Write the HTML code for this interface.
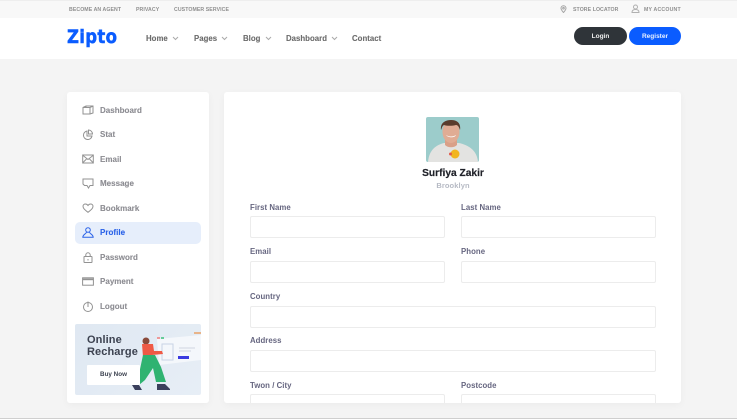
<!DOCTYPE html>
<html><head><meta charset="utf-8"><style>
*{box-sizing:border-box}
html,body{margin:0;padding:0;width:737px;height:419px;overflow:hidden;background:#f4f4f4;font-family:"Liberation Sans",sans-serif}
.a{position:absolute;white-space:nowrap}
#w{position:absolute;left:0;top:0;width:737px;height:419px;overflow:hidden;filter:blur(.35px)}
.top{font-size:5.2px;font-weight:700;color:#8f8f8f;letter-spacing:.08px;top:6.500px;line-height:6px}
.nav{font-size:7.8px;font-weight:700;color:#6c6c6c;letter-spacing:.03px;top:33.500px;line-height:10px;-webkit-text-stroke:.1px #6c6c6c}
.side{font-size:8px;font-weight:700;color:#8c8c92;letter-spacing:.02px;left:100px;line-height:10px;-webkit-text-stroke:.1px #8c8c92}
.lab{font-size:7.8px;font-weight:700;color:#666680;letter-spacing:.05px;line-height:10px}
.inp{position:absolute;height:22px;background:#fff;border:1px solid #ececec;border-radius:2px}
svg.i{position:absolute;fill:none;stroke:#929292;stroke-width:1}
</style></head><body><div id="w">
<div class="a" style="left:0;top:0;width:737px;height:18px;background:#f8f8f8;border-top:1px solid #eee"></div>
<div class="a" style="left:0;top:18px;width:737px;height:41px;background:#fff"></div>
<div class="a top" style="left:69px">BECOME AN AGENT</div>
<div class="a top" style="left:136px">PRIVACY</div>
<div class="a top" style="left:174px">CUSTOMER SERVICE</div>
<svg class="i" style="left:560px;top:5px;stroke:#a5a5a5" width="7" height="8" viewBox="0 0 7 8"><path d="M3.5 7.5C2 5.8 1 4.6 1 3.2a2.5 2.5 0 0 1 5 0c0 1.400-1 2.600-2.500 4.300z"/><circle cx="3.500" cy="3.200" r=".8"/></svg>
<div class="a top" style="left:573px">STORE LOCATOR</div>
<svg class="i" style="left:631px;top:4px;stroke:#b0b0b0" width="9" height="9" viewBox="0 0 9 9"><circle cx="4.500" cy="3" r="2"/><path d="M1 8.500c0-2 1.500-3 3.500-3s3.500 1 3.500 3z"/></svg>
<div class="a top" style="left:644px;letter-spacing:.2px">MY ACCOUNT</div>

<div class="a" style="left:67px;top:26px;font-size:19px;line-height:22px;font-weight:700;color:#0a5cff;letter-spacing:.35px;-webkit-text-stroke:.5px #0a5cff;font-family:'DejaVu Sans',sans-serif;transform:scaleX(.87);transform-origin:0 0">Zipto</div>
<div class="a nav" style="left:146px">Home</div>
<div class="a nav" style="left:194px">Pages</div>
<div class="a nav" style="left:243px">Blog</div>
<div class="a nav" style="left:286px">Dashboard</div>
<div class="a nav" style="left:352px">Contact</div>
<svg class="i" style="left:172px;top:36px;stroke:#aaa" width="7" height="5" viewBox="0 0 7 5"><path d="M1 1l2.500 2.500L6 1"/></svg>
<svg class="i" style="left:221px;top:36px;stroke:#aaa" width="7" height="5" viewBox="0 0 7 5"><path d="M1 1l2.500 2.500L6 1"/></svg>
<svg class="i" style="left:265px;top:36px;stroke:#aaa" width="7" height="5" viewBox="0 0 7 5"><path d="M1 1l2.500 2.500L6 1"/></svg>
<svg class="i" style="left:331px;top:36px;stroke:#aaa" width="7" height="5" viewBox="0 0 7 5"><path d="M1 1l2.500 2.500L6 1"/></svg>

<div class="a" style="left:574px;top:27px;width:53px;height:18px;border-radius:9px;background:#2f3439;color:#eee;font-size:6.500px;font-weight:700;text-align:center;line-height:19px">Login</div>
<div class="a" style="left:629px;top:27px;width:52px;height:18px;border-radius:9px;background:#0a5cff;color:#e8f0ff;font-size:6.500px;font-weight:700;text-align:center;line-height:19px">Register</div>

<div class="a" style="left:67px;top:92px;width:142px;height:311px;background:#fff;border-radius:3px;box-shadow:0 2px 8px rgba(0,0,0,.04)"></div>
<div class="a" style="left:224px;top:92px;width:457px;height:311px;background:#fff;border-radius:3px;box-shadow:0 2px 8px rgba(0,0,0,.04)"></div>

<div class="a" style="left:75px;top:222px;width:126px;height:22px;background:#e6eefb;border-radius:5px"></div>

<div class="a side" style="top:105.500px">Dashboard</div>
<div class="a side" style="top:130px">Stat</div>
<div class="a side" style="top:154.500px">Email</div>
<div class="a side" style="top:179px">Message</div>
<div class="a side" style="top:203.500px">Bookmark</div>
<div class="a side" style="top:228px;color:#2a62e8;-webkit-text-stroke:.1px #2a62e8">Profile</div>
<div class="a side" style="top:252.500px">Password</div>
<div class="a side" style="top:277px">Payment</div>
<div class="a side" style="top:301.500px">Logout</div>

<svg class="i" style="left:82px;top:105px" width="12" height="10" viewBox="0 0 12 10"><path d="M1 2.500L4 1h7v7L8 9H1zM1 2.500h7V9M8 2.500L11 1M4 1v2"/></svg>
<svg class="i" style="left:82px;top:129px" width="12" height="11" viewBox="0 0 12 11"><path d="M5 2a4.300 4.300 0 1 0 5 5H5z"/><path d="M6.500 1a4 4 0 0 1 4 4h-4z"/></svg>
<svg class="i" style="left:82px;top:154px" width="12" height="10" viewBox="0 0 12 10"><rect x=".7" y="1" width="10.600" height="8"/><path d="M1 1.500l5 4 5-4M1 8.500l3.500-3.500M11 8.500L7.500 5"/></svg>
<svg class="i" style="left:82px;top:178px" width="12" height="11" viewBox="0 0 12 11"><path d="M1 1h10v6.500H8L6.500 10 5 7.500H2.500L1 6z"/></svg>
<svg class="i" style="left:82px;top:203px" width="12" height="10" viewBox="0 0 12 10"><path d="M6 9.300C3 7 1 5.500 1 3.300 1 1.800 2.200 1 3.400 1 4.500 1 5.400 1.600 6 2.500 6.600 1.600 7.500 1 8.600 1 9.800 1 11 1.800 11 3.300 11 5.500 9 7 6 9.300z"/></svg>
<svg class="i" style="left:82px;top:227px;stroke:#2a62e8" width="12" height="11" viewBox="0 0 12 11"><circle cx="6" cy="3" r="2.300"/><path d="M4.500 5C4.500 7 1 7 .8 10.300h10.400C11 7 7.500 7 7.500 5"/></svg>
<svg class="i" style="left:83px;top:252px" width="10" height="11" viewBox="0 0 10 11"><rect x="1" y="4.500" width="8" height="6" rx=".5"/><path d="M2.800 4.500V3a2.200 2.200 0 0 1 4.400 0v1.500M5 7v1.500"/></svg>
<svg class="i" style="left:82px;top:277px" width="12" height="9" viewBox="0 0 12 9"><rect x=".6" y=".8" width="10.800" height="7.400"/><rect x="1" y="1.500" width="10" height="1.700" fill="#929292" stroke="none"/></svg>
<svg class="i" style="left:82px;top:301px" width="12" height="11" viewBox="0 0 12 11"><circle cx="6" cy="6" r="4.500"/><path d="M6 .5V6"/></svg>

<!-- banner -->
<div class="a" style="left:75px;top:324px;width:126px;height:71px;background:linear-gradient(135deg,#dfe8f2,#e7eef6);border-radius:2px;overflow:hidden">
<div class="a" style="left:12px;top:10px;font-size:11px;line-height:12px;font-weight:700;color:#3c4250;letter-spacing:.1px">Online<br>Recharge</div>
<svg class="a" style="left:0;top:0" width="126" height="71" viewBox="0 0 126 71">
<path d="M82 15L126 11V36L84 41z" fill="#f4f7fb"/>
<rect x="87" y="20" width="11" height="16" fill="none" stroke="#c9d3e4"/>
<rect x="103" y="32" width="11" height="3" fill="#3a3ae0"/>
<path d="M104 24h16M104 27h12" stroke="#cfd6e2"/>
<rect x="82" y="13" width="3" height="2" fill="#e99"/><rect x="86" y="13" width="3" height="2" fill="#6c9"/>
<rect x="119" y="8" width="7" height="2" fill="#e8b48a"/>
<circle cx="71" cy="17" r="3.500" fill="#8a4a3a"/>
<path d="M67 20h11l1 7 8 0 1 3-11 1-1 2H68z" fill="#ef5a45"/>
<path d="M68 31h12l6 12 5 15H81l-3-14-8 12-6 5v-11z" fill="#2fb371"/>
<path d="M57 61l7 0 3 5h-7zM82 60h8l5 5v1H82z" fill="#3a3f5c"/>
</svg>
<div class="a" style="left:12px;top:41px;width:53px;height:20px;background:#fff;border-radius:1px;font-size:6.300px;font-weight:700;color:#3c4250;text-align:center;line-height:20px">Buy Now</div>
</div>

<!-- avatar -->
<svg class="a" style="left:426px;top:117px;border-radius:2px" width="53" height="45" viewBox="0 0 53 45">
<rect width="53" height="45" fill="#9ccccb"/>
<path d="M2 45c1-12 8-17 16-19h15c9 2 18 7 19 19z" fill="#e3e3e1"/>
<path d="M19 22h12v6c-3 3-9 3-12 0z" fill="#d9a088"/>
<ellipse cx="25" cy="15" rx="8.500" ry="11" fill="#e0ac94"/>
<path d="M15 13c-1-7 4-10 10-10 7 0 10 4 9 10-1-3-2-5-4-5-4 1-9 1-12 0-2 1-2 3-3 5z" fill="#5a3c2c"/>
<path d="M20 18c3 2 7 2 10 0-1 3-8 3-10 0z" fill="#fff"/>
<circle cx="29" cy="37" r="4.500" fill="#f2b51f"/><circle cx="24.500" cy="37" r="1.500" fill="#e25a4a"/>
</svg>
<div class="a" style="left:353px;width:200px;top:168px;text-align:center;font-size:10.200px;line-height:12px;font-weight:700;color:#1f2128;-webkit-text-stroke:.2px #1f2128">Surfiya Zakir</div>
<div class="a" style="left:353px;width:200px;top:181px;text-align:center;font-size:7.500px;line-height:10px;font-weight:700;color:#b6bac4;letter-spacing:.1px">Brooklyn</div>

<div class="a lab" style="left:250px;top:202.500px">First Name</div>
<div class="a lab" style="left:461px;top:202.500px">Last Name</div>
<div class="inp" style="left:250px;top:216px;width:195px"></div>
<div class="inp" style="left:461px;top:216px;width:195px"></div>
<div class="a lab" style="left:250px;top:247px">Email</div>
<div class="a lab" style="left:461px;top:247px">Phone</div>
<div class="inp" style="left:250px;top:261px;width:195px"></div>
<div class="inp" style="left:461px;top:261px;width:195px"></div>
<div class="a lab" style="left:250px;top:291.500px">Country</div>
<div class="inp" style="left:250px;top:305.500px;width:406px"></div>
<div class="a lab" style="left:250px;top:336px">Address</div>
<div class="inp" style="left:250px;top:350px;width:406px"></div>
<div class="a lab" style="left:250px;top:380.500px">Twon / City</div>
<div class="a lab" style="left:461px;top:380.500px">Postcode</div>
<div class="a" style="left:224px;top:394px;width:457px;height:9px;overflow:hidden">
<div class="inp" style="left:26px;top:0;width:195px"></div>
<div class="inp" style="left:237px;top:0;width:195px"></div>
</div>
<div class="a" style="left:0;top:418px;width:737px;height:1px;background:#cfcfcf"></div>
</div></body></html>
